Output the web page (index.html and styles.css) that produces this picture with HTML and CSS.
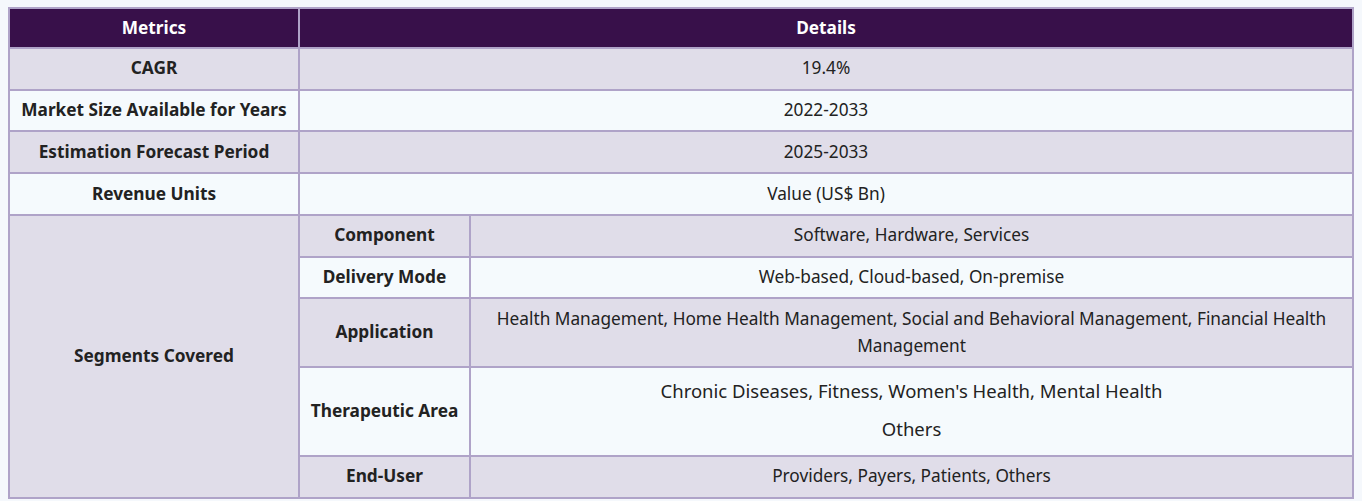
FILE: index.html
```html
<!DOCTYPE html>
<html>
<head>
<meta charset="utf-8">
<link rel="stylesheet" href="styles.css">
</head>
<body>
<table class="report">
  <colgroup>
    <col class="c1">
    <col class="c2">
    <col class="c3">
  </colgroup>
  <thead>
    <tr class="head">
      <th>Metrics</th>
      <th colspan="2">Details</th>
    </tr>
  </thead>
  <tbody>
    <tr class="odd">
      <th>CAGR</th>
      <td colspan="2">19.4%</td>
    </tr>
    <tr class="even">
      <th>Market Size Available for Years</th>
      <td colspan="2">2022-2033</td>
    </tr>
    <tr class="odd">
      <th>Estimation Forecast Period</th>
      <td colspan="2">2025-2033</td>
    </tr>
    <tr class="even">
      <th>Revenue Units</th>
      <td colspan="2">Value (US$ Bn)</td>
    </tr>
    <tr class="odd">
      <th rowspan="5" class="seg">Segments Covered</th>
      <th>Component</th>
      <td>Software, Hardware, Services</td>
    </tr>
    <tr class="even">
      <th>Delivery Mode</th>
      <td>Web-based, Cloud-based, On-premise</td>
    </tr>
    <tr class="odd">
      <th>Application</th>
      <td>Health Management, Home Health Management, Social and Behavioral Management, Financial Health Management</td>
    </tr>
    <tr class="even">
      <th>Therapeutic Area</th>
      <td class="multi"><p>Chronic Diseases, Fitness, Women's Health, Mental Health</p><p>Others</p></td>
    </tr>
    <tr class="odd">
      <th>End-User</th>
      <td>Providers, Payers, Patients, Others</td>
    </tr>
  </tbody>
</table>
</body>
</html>
```
FILE: styles.css
```css
html, body {
  background: #f5f8fc;
}
body {
  margin: 7px 8px 8px 8px;
  font-family: "Noto Sans", Lato, sans-serif;
  font-size: 17.25px;
  color: #222222;
}
.report {
  width: 100%;
  border-collapse: collapse;
  table-layout: fixed;
  border: 2px solid #afa3c8;
}
.c1 { width: 290px; }
.c2 { width: 171px; }
.report th, .report td {
  border: 2px solid #afa3c8;
  text-align: center;
  vertical-align: middle;
  padding: 6.5px 8px;
  line-height: 26.75px;
}
.report th {
  font-weight: 700;
}
.report td {
  font-weight: 400;
}
.report .head th {
  background: #38104a;
  color: #ffffff;
  padding-top: 5.6px;
  padding-bottom: 5.6px;
}
.odd th, .odd td {
  background: #e0dde9;
}
.even th, .even td {
  background: #f5fafd;
}
.report .seg {
  background: #e0dde9;
}
.report .multi {
  padding-top: 10px;
  padding-bottom: 12.5px;
}
.multi p {
  margin: 0;
  font-size: 18.5px;
}
.multi p:first-child {
  margin-bottom: 11px;
}
```
